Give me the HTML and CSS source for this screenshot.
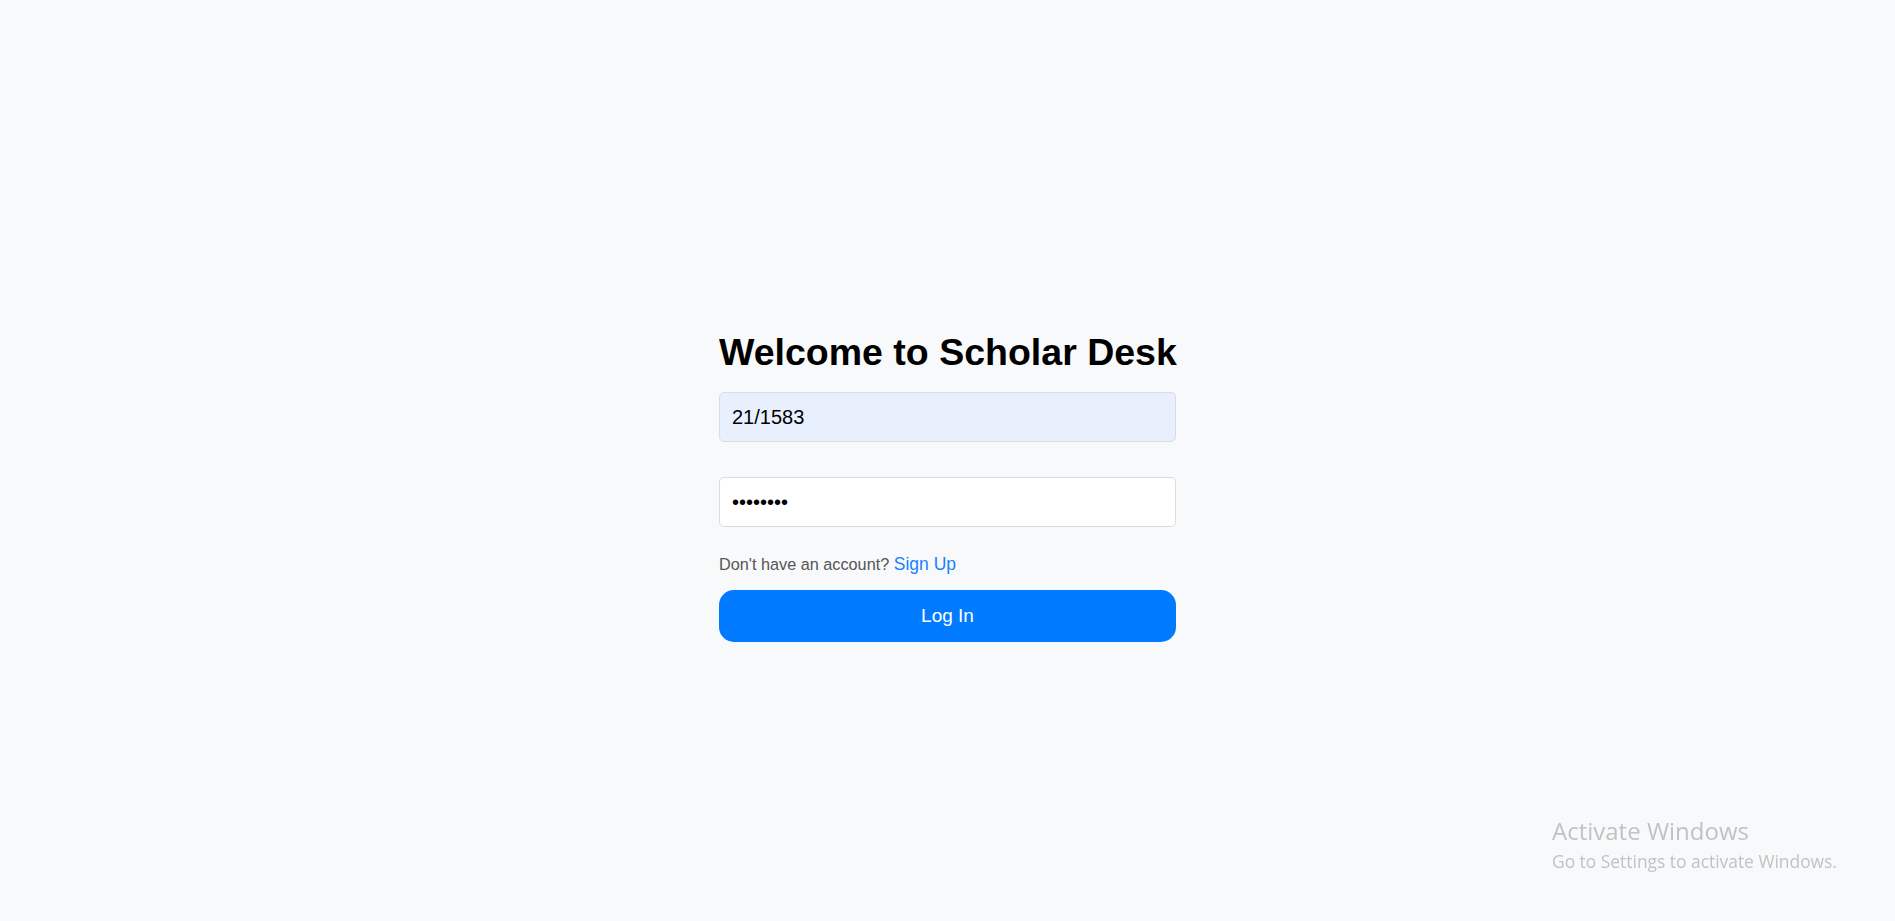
FILE: index.html
```html
<!DOCTYPE html>
<html lang="en">
<head>
<meta charset="utf-8">
<title>Scholar Desk</title>
<link rel="stylesheet" href="styles.css">
</head>
<body>
<main class="page">
  <form class="login">
    <h1 class="title">Welcome to Scholar Desk</h1>
    <input class="field field-filled" type="text" value="21/1583">
    <input class="field" type="password" value="12345678">
    <p class="signup">Don't have an account? <a class="signup-link" href="#">Sign Up</a></p>
    <button class="btn" type="button">Log In</button>
  </form>
</main>
<div class="watermark">
  <div class="wm-title">Activate Windows</div>
  <div class="wm-sub">Go to Settings to activate Windows.</div>
</div>
</body>
</html>
```
FILE: styles.css
```css
html, body {
  margin: 0;
  padding: 0;
}
body {
  background: #f8f9fa;
  font-family: "Liberation Sans", Arial, sans-serif;
  min-height: 100vh;
}
.page {
  padding-top: 331px;
}
.login {
  width: 457px;
  margin: 0 auto;
  display: flex;
  flex-direction: column;
}
.title {
  margin: 0 0 19px;
  font-size: 37.5px;
  line-height: 42px;
  font-weight: bold;
  color: #000;
  white-space: nowrap;
}
.field {
  box-sizing: border-box;
  width: 100%;
  height: 50px;
  margin: 0 0 35px;
  padding: 0 12px;
  border: 1px solid #dadce0;
  border-radius: 5px;
  background: #fff;
  font-family: "Liberation Sans", Arial, sans-serif;
  font-size: 20px;
  color: #000;
  outline: none;
}
.field:last-of-type {
  margin-bottom: 0;
}
.field-filled {
  background: #e8f0fe;
}
.signup {
  margin: 27px 0 16px;
  font-size: 16.25px;
  line-height: 20px;
  color: #555;
}
.signup-link {
  color: #1a80ff;
  font-size: 17.5px;
  text-decoration: none;
}
.btn {
  height: 52px;
  width: 100%;
  border: none;
  border-radius: 15px;
  background: #007bff;
  color: #fff;
  font-family: "Liberation Sans", Arial, sans-serif;
  font-size: 19px;
  line-height: 22px;
  padding: 0;
  cursor: pointer;
}
.watermark {
  position: fixed;
  left: 1552px;
  top: 816px;
  color: #c2c2c2;
  font-family: "Open Sans", "Noto Sans", sans-serif;
  pointer-events: none;
}
.wm-title {
  font-size: 24px;
  line-height: 30px;
}
.wm-sub {
  margin-top: 4px;
  font-size: 17.4px;
  line-height: 22px;
}
```
